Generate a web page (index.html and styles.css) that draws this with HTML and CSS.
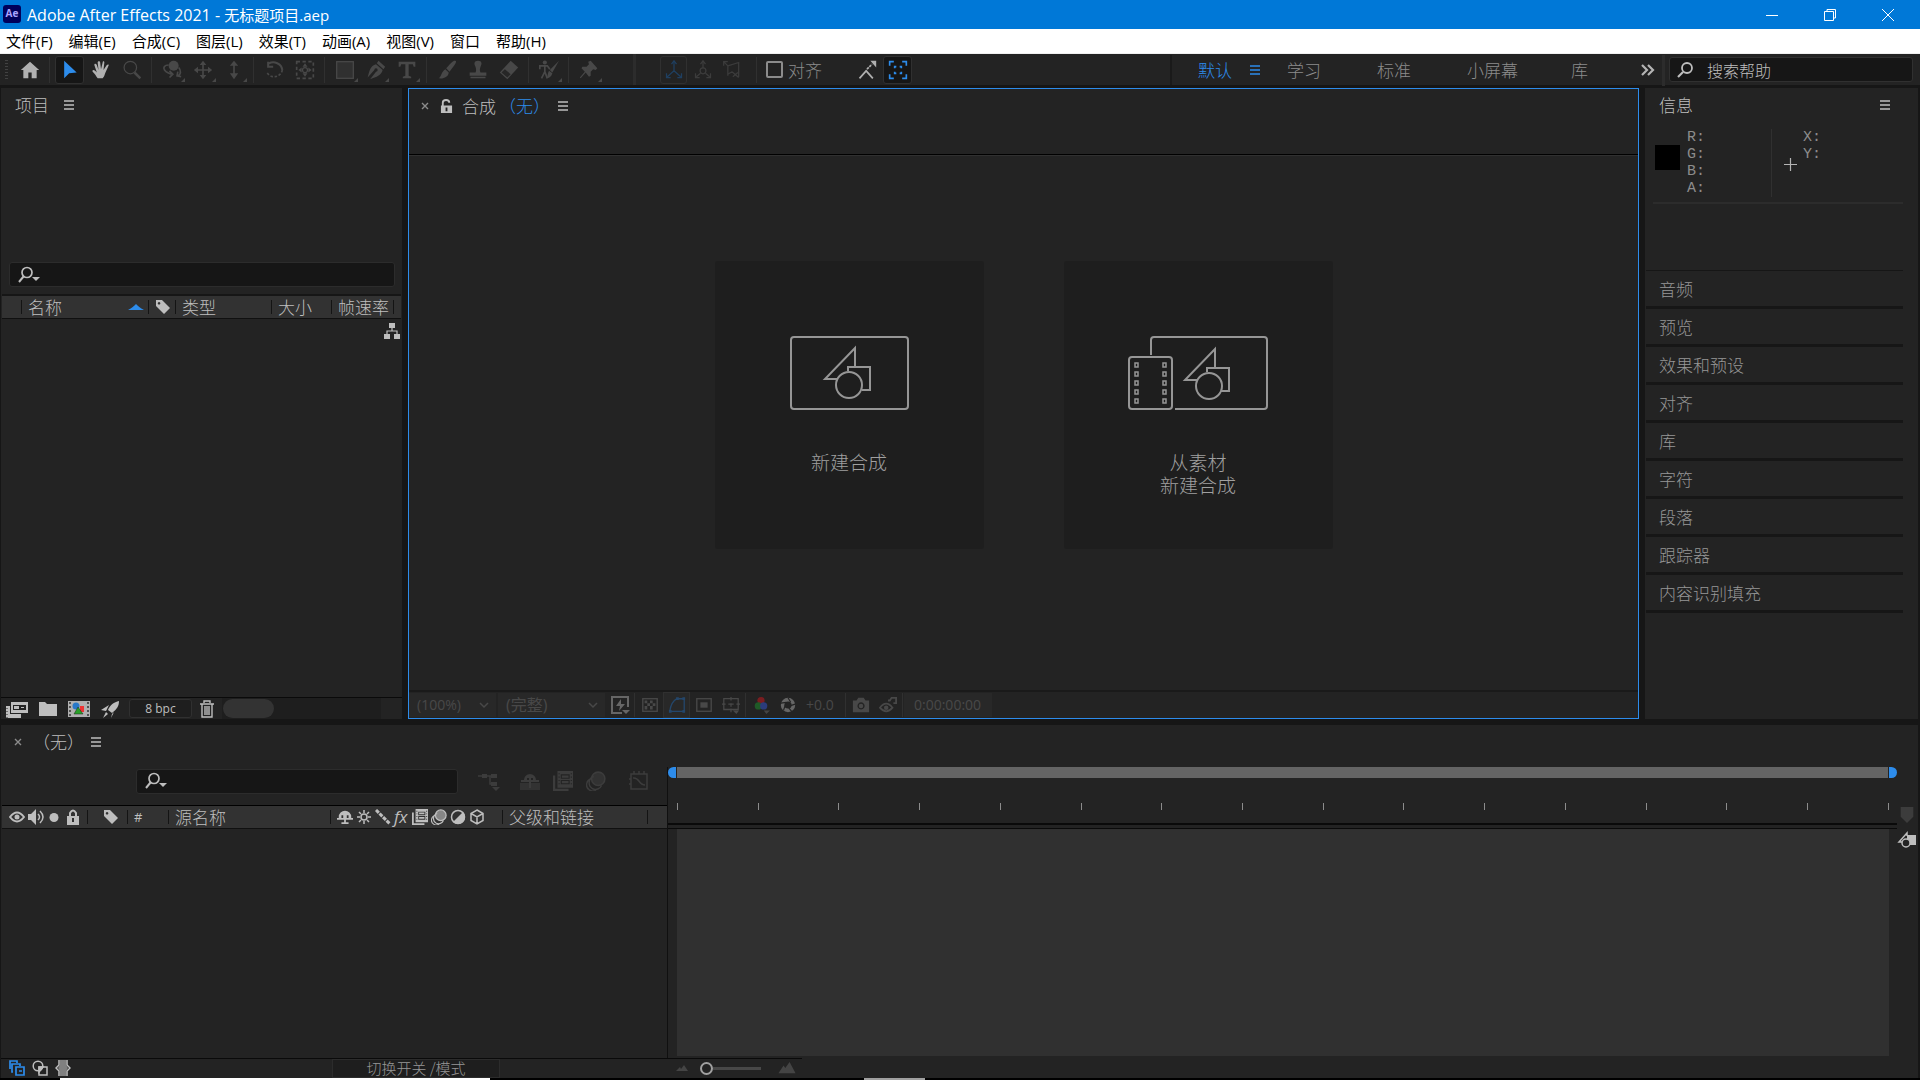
FILE: index.html
```html
<!DOCTYPE html>
<html lang="zh-CN">
<head>
<meta charset="utf-8">
<title>Adobe After Effects 2021 - 无标题项目.aep</title>
<link rel="stylesheet" href="styles.css">
</head>
<body>
<svg class="defs" aria-hidden="true">
  <symbol id="menu" viewBox="0 0 12 12"><path d="M1 2h10M1 6h10M1 10h10" stroke="currentColor" stroke-width="1.6"/></symbol>
  <symbol id="search-drop" viewBox="0 0 24 18"><circle cx="9" cy="6.500" r="5" fill="none" stroke="currentColor" stroke-width="1.700"/><path d="M5.500 10.500 1 16" stroke="currentColor" stroke-width="2"/><path d="M14 11h8l-4 4z" fill="currentColor"/></symbol>
  <symbol id="tag" viewBox="0 0 16 16"><path fill="currentColor" fill-rule="evenodd" d="M1 1h6l8 8-6 6-8-8zM4 3a1.300 1.300 0 1 0 .1 0z"/></symbol>
  <symbol id="close" viewBox="0 0 12 12"><path d="m3 3 6 6m0-6-6 6" stroke="currentColor" stroke-width="1.400"/></symbol>
  <symbol id="chev" viewBox="0 0 12 12"><path d="m2 4 4 4 4-4" stroke="currentColor" stroke-width="1.500" fill="none"/></symbol>
  <symbol id="film" viewBox="1 1 18 18"><path fill="currentColor" fill-rule="evenodd" d="M5 1h14v15H5zM8 4v4h8V4zM8 9v4h8V9zM6 3v1h1V3zm0 3v1h1V6zm0 3v1h1V9zm0 3v1h1v-1zM17 3v1h1V3zm0 3v1h1V6zm0 3v1h1V9zm0 3v1h1v-1z"/><path fill="currentColor" d="M9 5h6v2H9zM9 10h6v2H9z"/><path d="M2 5v13h13" fill="none" stroke="currentColor" stroke-width="2"/></symbol>
  <symbol id="blur" viewBox="1 1 18 18"><path d="M8 6a6 6 0 0 0-1 11 6 6 0 0 0 8-3M6 8a5.500 5.500 0 0 0-2 10 5 5 0 0 0 6 0" fill="none" stroke="currentColor" stroke-width="1.300"/><circle cx="12" cy="8" r="6" fill="currentColor" fill-opacity=".6" stroke="currentColor" stroke-width="1.400"/></symbol>
  <symbol id="shy" viewBox="1 1 18 18"><path fill="currentColor" fill-rule="evenodd" d="M3 10a7 7 0 0 1 14 0v1h2v2h-8v3h3v2H6v-2h3v-3H1v-2h2zm3-1v2h2V8H6zm6-1v3h2V8z"/></symbol>
</svg>
<div class="app">
  <header class="titlebar">
    <svg class="logo" viewBox="0 0 18 18"><rect width="18" height="18" rx="3" fill="#00005b"/><text x="9" y="12" text-anchor="middle" class="logo-text">Ae</text></svg>
    <h1>Adobe After Effects 2021 - <span class="file">无标题项目.aep</span></h1>
    <div class="window-buttons">
      <button aria-label="最小化"><svg viewBox="0 0 14 14"><path d="M1 7.500h12"/></svg></button>
      <button aria-label="还原"><svg viewBox="0 0 14 14"><path d="M1.500 3.500h9v9h-9zM4 3V1.500h8.500V10H11"/></svg></button>
      <button aria-label="关闭"><svg viewBox="0 0 14 14"><path d="m1 1 12 12M13 1 1 13"/></svg></button>
    </div>
  </header>
  <nav class="menubar">
    <button>文件(F)</button><button>编辑(E)</button><button>合成(C)</button><button>图层(L)</button><button>效果(T)</button><button>动画(A)</button><button>视图(V)</button><button>窗口</button><button>帮助(H)</button>
  </nav>

  <div class="toolbar">
    <i class="grip"></i>
    <button class="tool lit" aria-label="主页"><svg viewBox="0 0 24 24"><path fill="currentColor" d="M12 2 1 12h3v10h6v-7h4v7h6V12h3z"/></svg></button>
    <i class="sep"></i>
    <button class="tool on" aria-label="选取工具"><svg viewBox="0 0 24 24"><path fill="currentColor" d="M5 1v21l6-6 9-1z"/></svg></button>
    <button class="tool lit" aria-label="手形工具"><svg viewBox="0 0 24 24"><path fill="currentColor" d="M8 22c-2-3-3-5-6-8-1-2 1-3 3-1l2 2L4 6c0-2 2-2 3 0l2 6-1-9c0-2 3-2 3 0l1 8 2-8c0-2 2-2 2 0l-1 9 4-6c1-1 3-1 2 1l-4 9c-1 3-1 4-3 6z"/></svg></button>
    <button class="tool" aria-label="缩放工具"><svg viewBox="0 0 24 24" class="line"><circle cx="10" cy="9" r="7.500"/><path d="m15 15 7 7" stroke-width="3"/></svg></button>
    <i class="sep"></i>
    <button class="tool more" aria-label="轨道工具"><svg viewBox="0 0 24 24"><circle cx="14" cy="7" r="6" fill="currentColor"/><g class="line"><path d="M8 6C3 6 1 9 3 12s7 5 10 5M9 13l4 4-4 4M20 9c3 3 3 9-1 10M19 14l-1 5 5 1" stroke-width="2"/></g></svg></button>
    <button class="tool more" aria-label="平移工具"><svg viewBox="0 0 24 24"><path fill="currentColor" d="m12 1 4 5h-3v5h5V8l5 4-5 4v-3h-5v5h3l-4 5-4-5h3v-5H6v3l-5-4 5-4v3h5V6H8z"/></svg></button>
    <button class="tool more" aria-label="推拉工具"><svg viewBox="0 0 24 24"><path fill="currentColor" d="m12 1 5 6h-4v9h4l-5 7-5-7h4V7H7z"/></svg></button>
    <i class="sep"></i>
    <button class="tool" aria-label="旋转工具"><svg viewBox="0 0 24 24"><g class="line"><path d="M6 4c6-3 15 0 16 8M5 2v6h6" stroke-width="2.500"/><path d="M22 12a10 10 0 0 1-19 2" stroke-width="2" stroke-dasharray="3 2"/></g></svg></button>
    <button class="tool" aria-label="锚点工具"><svg viewBox="0 0 24 24"><rect x="2" y="2" width="20" height="20" class="line" stroke-width="2" stroke-dasharray="4 3"/><path fill="currentColor" d="m12 4 3 4H9zM12 20l3-4H9zM4 12l4-3v6zM20 12l-4-3v6z"/><circle cx="12" cy="12" r="3" class="line"/></svg></button>
    <i class="sep"></i>
    <button class="tool more" aria-label="矩形工具"><svg viewBox="0 0 24 24"><rect x="2" y="2" width="20" height="20" fill="#303030" stroke="currentColor" stroke-width="1.500"/></svg></button>
    <button class="tool more" aria-label="钢笔工具"><svg viewBox="0 0 24 24"><path fill="currentColor" d="m15 1 8 7-2 3-8-7zM12 5l8 7c-2 7-7 8-15 11l7-9a2 2 0 1 0-2-2l-8 9C4 13 5 7 12 5z"/></svg></button>
    <button class="tool more" aria-label="文字工具"><svg viewBox="0 0 24 24"><path fill="currentColor" d="M2 2h20v6h-2l-1-3h-5v14l3 1v2H7v-2l3-1V5H5L4 8H2z"/></svg></button>
    <i class="sep"></i>
    <button class="tool" aria-label="画笔工具"><svg viewBox="0 0 24 24"><path fill="currentColor" d="M22 1c2 1 1 3-7 13l-4-4C18 2 20 0 22 1zM10 11l4 4c0 5-6 8-12 7 4-3 3-8 8-11z"/></svg></button>
    <button class="tool" aria-label="仿制图章工具"><svg viewBox="0 0 24 24"><path fill="currentColor" d="M12 1c5 0 5 4 3 7-1 3-1 5 0 7h7v4H2v-4h7c1-2 1-4 0-7-2-3-2-7 3-7zM3 20h18v2H3z"/></svg></button>
    <button class="tool" aria-label="橡皮擦工具"><svg viewBox="0 0 24 24"><path fill="currentColor" d="m14 1 9 8-13 14-9-8z"/><path fill="#272727" d="m7 11 7 6-4 4-7-6z"/></svg></button>
    <i class="sep"></i>
    <button class="tool more" aria-label="Roto 笔刷工具"><svg viewBox="0 0 24 24"><circle cx="7" cy="3" r="2.500" fill="currentColor"/><path d="M1 11V7h9l3 4M7 7v7l-4 8m4-8 3 8" class="line" stroke-width="2"/><path fill="currentColor" d="M24 1 16 15l-3-3zM12 13l4 3c-1 4-4 6-7 6 2-3 1-6 3-9z"/></svg></button>
    <i class="sep"></i>
    <button class="tool more" aria-label="人偶位控点工具"><svg viewBox="0 0 24 24"><path fill="currentColor" d="m14 1 8 9-2 2-3-1-3 3v5l-2 1-4-5-6 7-1-1 6-7-4-4 1-2h5l3-3-1-3z"/></svg></button>
    <i class="sep wide"></i>
    <div class="axes">
      <button class="tool framed" aria-label="本地轴模式"><svg viewBox="0 0 24 24" class="line"><path d="M12 3v10l-8 7m8-7 8 7M9 5l3-4 3 4M3 16v5h5M21 16v5h-5"/></svg></button>
      <button class="tool" aria-label="世界轴模式"><svg viewBox="0 0 24 24" class="line"><circle cx="12" cy="13" r="3.500"/><path d="M12 3v7m-3 6-5 4m11-4 5 4M9 5l3-4 3 4M3 16v5h5M21 16v5h-5"/></svg></button>
      <button class="tool" aria-label="视图轴模式"><svg viewBox="0 0 24 24" class="line"><path d="M2 7V2h5M2 2l5 5M7 7v12M7 7l13-4v17M7 17l5-3M12 14l8 7M13 20l6-5"/></svg></button>
    </div>
    <i class="sep"></i>
    <label class="snap"><input type="checkbox">对齐</label>
    <button class="tool lit" aria-label="对齐选项"><svg viewBox="0 0 24 24"><path d="m3 22 8-9 8 9" class="line" stroke-width="2"/><path d="m12 11 6-6" class="line" stroke-width="2" stroke-dasharray="3 1"/><path fill="currentColor" d="M16 1h7v8z"/></svg></button>
    <button class="tool on" aria-label="对齐到图层"><svg viewBox="0 0 24 24" class="line"><path d="M2 7V2h5M17 2h5v5M22 17v5h-5M7 22H2v-5" stroke-width="2"/><path d="M8 10V8h2M14 8h2v2M16 14v2h-2M10 16H8v-2" stroke-width="2"/></svg></button>
    <div class="workspaces">
      <button class="ws current">默认</button><button class="burger current" aria-label="工作区菜单"><svg><use href="#menu"/></svg></button>
      <button class="ws">学习</button><button class="ws">标准</button><button class="ws">小屏幕</button><button class="ws">库</button>
      <button class="more-ws" aria-label="更多"><svg viewBox="0 0 14 14" class="line"><path d="m1 2 5 5-5 5m6-10 5 5-5 5" stroke-width="2.200"/></svg></button>
    </div>
    <label class="help"><svg viewBox="0 0 18 18" class="line"><circle cx="11" cy="7" r="5" stroke-width="1.800"/><path d="m7 11-5 5" stroke-width="2.200"/></svg><input type="text" placeholder="搜索帮助" aria-label="搜索帮助"></label>
  </div>

  <main class="workspace">
    <section class="panel project">
      <div class="tab"><h2>项目</h2><button class="burger" aria-label="面板菜单"><svg><use href="#menu"/></svg></button></div>
      <label class="search"><svg><use href="#search-drop"/></svg><input type="text" aria-label="搜索项目"></label>
      <table class="cols project-cols">
        <colgroup><col class="w19"><col class="w127"><col class="w27"><col class="w96"><col class="w60"><col class="w62"><col></colgroup>
        <thead><tr><th></th><th><span class="sorted">名称<svg viewBox="0 0 16 7"><path d="M8 0c2 2 4 4 8 6H0c4-2 6-4 8-6z" fill="#2d8ceb"/></svg></span></th><th><svg class="s16"><use href="#tag"/></svg></th><th>类型</th><th>大小</th><th>帧速率</th><th></th></tr></thead>
      </table>
      <div class="list"><button class="flow" aria-label="项目流程图"><svg viewBox="0 0 18 18"><path fill="currentColor" d="M6 1h6v5H6zM1 12h6v5H1zM11 12h6v5h-6z"/><path d="M9 6v3M4 12V9h10v3" class="line" stroke-width="1.200"/></svg></button></div>
      <div class="project-foot">
        <button aria-label="解释素材"><svg viewBox="0 0 24 18"><path fill="currentColor" fill-rule="evenodd" d="M6 2h17v11H6zm2 3v5h13V5zm8 2h3v1h-3zM9 6h5v3H9z"/><path d="M3 6v10h13" class="line" stroke-width="4"/><path d="M2 5v13" stroke="#232323" stroke-dasharray="1 2"/></svg></button>
        <button aria-label="新建文件夹"><svg viewBox="0 0 24 18"><path fill="currentColor" d="M3 2h6l2 2h10v12H3z"/></svg></button>
        <button aria-label="新建合成"><svg viewBox="0 0 24 18"><path fill="#b0b0b0" d="M1 1h22v16H1z"/><path d="M3 2v15M21 2v15" stroke="#333" stroke-width="1.500" stroke-dasharray="2 2"/><circle cx="9" cy="6" r="3.500" fill="#2878c8"/><path fill="#e33" d="M13 6h4v6h-4z"/><path fill="#28a028" stroke="#222" stroke-width=".5" d="m11 7 5 7H7z"/></svg></button>
        <button aria-label="项目设置"><svg viewBox="0 0 24 18"><path fill="currentColor" d="M21 1c0 5-2 8-7 12l-4-3c2-5 6-8 11-9zM11 5l-8 5 5 1zM14 14l2-2-3 6zM8 12l2 2-5 4z"/></svg></button>
        <button class="bpc">8 bpc</button>
        <button class="trash" aria-label="删除"><svg viewBox="4 0 16 18"><path d="M5 4h14M9 3V1h6v2M7 4v13h10V4M10 6v9m2-9v9m2-9v9" class="line" stroke-width="1.400"/></svg></button>
        <div class="track"><i></i></div>
      </div>
    </section>

    <section class="panel comp">
      <div class="tab comp-tab"><button class="x" aria-label="关闭"><svg><use href="#close"/></svg></button><svg class="lock" viewBox="0 0 14 16"><path d="M3 8V4c0-4 7-4 7 0" class="line" stroke-width="2"/><path fill="currentColor" fill-rule="evenodd" d="M1 7h12v8H1zm5 2v4h2V9z"/></svg><h2>合成<span class="blue">（无）</span></h2><button class="burger" aria-label="面板菜单"><svg><use href="#menu"/></svg></button></div>
      <div class="stage">
        <button class="card">
          <svg viewBox="0 0 142 76"><g class="line"><rect x="13" y="2" width="117" height="72" rx="3"/><path d="M77 32V13L47 44h12M70 36v-4h22v23h-8"/><circle cx="71" cy="50" r="13"/></g></svg>
          <span>新建合成</span>
        </button>
        <button class="card">
          <svg viewBox="0 0 142 76"><g class="line"><path d="M24 20V5q0-3 3-3h110q3 0 3 3v66q0 3-3 3H48M88 33V14L58 45h12M80 37v-4h22v23h-8"/><rect x="2" y="22" width="43" height="52" rx="3"/><circle cx="82" cy="51" r="13"/><path stroke-width="1.500" d="M8 28h3v4H8zM8 37h3v4H8zM8 46h3v4H8zM8 55h3v4H8zM8 64h3v4H8zM36 28h3v4h-3zM36 37h3v4h-3zM36 46h3v4h-3zM36 55h3v4h-3zM36 64h3v4h-3z"/></g></svg>
          <span>从素材<br>新建合成</span>
        </button>
      </div>
      <div class="comp-foot">
        <button class="drop d1">(100%)<svg><use href="#chev"/></svg></button>
        <button class="drop d2">(完整)<svg><use href="#chev"/></svg></button>
        <button class="ic lighter" aria-label="快速预览"><svg viewBox="0 0 20 20"><path d="M12 18H2V2h16v10" class="line" stroke-width="2"/><path fill="currentColor" d="M11 4 6 11h4l-1 5 6-7h-4zM12 15h8l-4 4z"/></svg></button>
        <i class="fsep"></i>
        <button class="ic" aria-label="透明网格"><svg viewBox="0 0 20 20"><rect x="2" y="3" width="16" height="14" class="line"/><path fill="currentColor" d="M4 5h3v3H4zM10 5h3v3h-3zM7 8h3v3H7zM13 8h3v3h-3zM4 11h3v4H4zM10 11h3v4h-3z"/></svg></button>
        <button class="ic mask" aria-label="蒙版"><svg viewBox="0 0 20 20" class="line"><path d="M2 17h16V3h-8C6 5 3 10 2 17z"/><path d="M1 17h3M16 17h3M16 3h3M9 3h3" stroke-width="3"/></svg></button>
        <button class="ic" aria-label="目标区域"><svg viewBox="0 0 20 20"><rect x="2" y="3" width="16" height="14" class="line"/><path fill="currentColor" d="M6 7h8v6H6z"/></svg></button>
        <button class="ic" aria-label="网格和参考线"><svg viewBox="0 0 20 20"><path d="M2 3h16v12H2zM10 1v4m0 3v4m0 2v4M0 9h4m3 0h6m3 0h4" class="line" stroke-width="1.400"/><path fill="currentColor" d="M12 16h7l-3 4z"/></svg></button>
        <i class="fsep"></i>
        <button class="ic rgb" aria-label="通道"><svg viewBox="0 0 20 20"><circle cx="10" cy="5" r="4" fill="#7a1d20"/><circle cx="7" cy="11" r="4" fill="#1f5a27"/><circle cx="13" cy="11" r="4" fill="#2b3c7b"/><path fill="#444" d="M13 16h7l-4 4z"/></svg></button>
        <button class="ic lens" aria-label="重置曝光度"><svg viewBox="0 0 20 20"><circle cx="10" cy="10" r="6" class="line" stroke-width="4"/><path d="m10 2 3 5M18 9l-6 2M14 17l-4-5M5 16l2-6M2 8l6-1" stroke="#232323" stroke-width="1.300"/></svg></button>
        <span class="expo">+0.0</span>
        <i class="fsep"></i>
        <button class="ic" aria-label="拍摄快照"><svg viewBox="0 0 20 20"><path fill="currentColor" fill-rule="evenodd" d="M1 5h4l2-3h6l2 3h4v13H1zm9 2a4 4 0 1 0 .1 0z"/><circle cx="10" cy="11" r="2.500" fill="currentColor"/></svg></button>
        <button class="ic" aria-label="显示快照"><svg viewBox="0 0 20 20"><path d="M1 13q7-9 14 0-7 8-14 0z" class="line" stroke-width="2"/><circle cx="8" cy="13" r="2.500" fill="currentColor"/><path d="M10 5h2l2-3h5v6h-3" class="line" stroke-width="2"/></svg></button>
        <i class="fsep"></i>
        <span class="time">0:00:00:00</span>
      </div>
    </section>

    <aside class="panel side">
      <div class="tab"><h2>信息</h2><button class="burger" aria-label="面板菜单"><svg><use href="#menu"/></svg></button></div>
      <div class="info">
        <i class="swatch"></i>
        <ul class="rgba"><li>R:</li><li>G:</li><li>B:</li><li>A:</li></ul>
        <svg class="cross" viewBox="0 0 13 13"><path d="M6.500 0v13M0 6.500h13" stroke="#b4b4b4" stroke-width="1.200"/></svg>
        <ul><li>X:</li><li>Y:</li></ul>
      </div>
      <ul class="drawers"><li><button>音频</button></li><li><button>预览</button></li><li><button>效果和预设</button></li><li><button>对齐</button></li><li><button>库</button></li><li><button>字符</button></li><li><button>段落</button></li><li><button>跟踪器</button></li><li><button>内容识别填充</button></li></ul>
    </aside>

    <section class="panel timeline">
      <div class="layers">
        <div class="tab time-tab"><button class="x" aria-label="关闭"><svg><use href="#close"/></svg></button><h2>（无）</h2><button class="burger" aria-label="面板菜单"><svg><use href="#menu"/></svg></button></div>
        <div class="time-tools">
          <label class="search"><svg><use href="#search-drop"/></svg><input type="text" aria-label="搜索图层"></label>
          <button class="ic first" aria-label="合成微型流程图"><svg viewBox="0 0 22 20"><path d="M0 5h9M9 5h4M12 5v8h3M14 5h4M14 13h4" class="line"/><path fill="currentColor" d="M4 3h5v4H4zM13 3h6v4h-6zM13 11h6v4h-6zM14 16h8l-4 4z"/></svg></button>
          <button class="ic" aria-label="隐藏消隐图层"><svg viewBox="0 0 20 20"><path fill="currentColor" opacity=".6" d="M0 12h20v7H0z"/><path fill="currentColor" fill-rule="evenodd" d="M4 9a6 6 0 0 1 12 0h3v2h-8v6H9v-6H1V9zm3-2v2h2V7zm4 0v2h2V7z"/></svg></button>
          <button class="ic" aria-label="帧混合"><svg><use href="#film"/></svg></button>
          <button class="ic" aria-label="运动模糊"><svg><use href="#blur"/></svg></button>
          <button class="ic last" aria-label="图表编辑器"><svg viewBox="0 0 20 20" class="line"><path d="M2 3h16v15H2zM5 0v3m5-3v3m5-3v3M0 8h2m-2 5h2M4 7c7-1 5 7 12 7"/></svg></button>
        </div>
        <table class="cols time-cols">
          <colgroup><col class="w85"><col class="w40"><col class="w41"><col class="w162"><col class="w172"><col class="w145"><col></colgroup>
          <thead><tr>
            <th><span class="switches"><svg viewBox="0 0 16 16"><path d="M1 8q7-9 14 0-7 9-14 0z" class="line" stroke-width="2"/><circle cx="8" cy="8" r="2.500" fill="currentColor"/></svg><svg viewBox="0 0 16 16"><path fill="currentColor" d="M0 5h3l5-5v16l-5-5H0z"/><path d="M10 5q3 3 0 6M12 2q6 6 0 12" class="line"/></svg><svg viewBox="0 0 16 16"><circle cx="7" cy="8.500" r="4.500" fill="currentColor"/></svg><svg viewBox="0 0 16 16"><path d="M4 8V4q3-5 6 0v4" class="line" stroke-width="2"/><path fill="currentColor" fill-rule="evenodd" d="M1 7h12v9H1zm5 2v4h2V9z"/></svg></span></th>
            <th class="tagcell"><svg class="s16"><use href="#tag"/></svg></th><th class="hash">#</th><th>源名称</th>
            <th><span class="switches"><svg><use href="#shy"/></svg><svg viewBox="0 0 16 16"><circle cx="8" cy="8" r="3" class="line"/><path d="M8 1v3m0 8v3M1 8h3m8 0h3M3 3l2 2m6 6 2 2m0-10-2 2m-6 6-2 2" class="line"/></svg><svg viewBox="0 0 16 16"><path d="m1 1 14 14" class="line" stroke-width="3" stroke-dasharray="4 1"/></svg><em>fx</em><svg><use href="#film"/></svg><svg><use href="#blur"/></svg><svg viewBox="0 0 16 16"><circle cx="8" cy="8" r="6.500" class="line"/><path fill="currentColor" d="M13 3 3 13a7 7 0 1 1 10-10z" transform="rotate(180 8 8)"/></svg><svg viewBox="0 0 16 16"><path d="M8 1 14 4.500v7L8 15l-6-3.500v-7zM2 4.500 8 8l6-3.500M8 8v7" class="line"/></svg></span></th>
            <th>父级和链接</th><th></th>
          </tr></thead>
        </table>
        <div class="layer-list"></div>
      </div>
      <div class="ruler-side">
        <div class="workarea"><i class="handle left"></i><i class="bar"></i><i class="handle right"></i></div>
        <div class="ticks"><i></i><i></i><i></i><i></i><i></i><i></i><i></i><i></i><i></i><i></i><i></i><i></i><i></i><i></i><i></i><i></i></div>
        <div class="lane"><div></div></div>
      </div>
      <div class="rail">
        <svg viewBox="0 0 16 20"><path fill="#3c3c3c" d="M1 1h14v11l-7 7-7-7z"/></svg>
        <button aria-label="合成按钮"><svg viewBox="0 0 20 18"><path fill="currentColor" d="M10 4h9v10h-9z"/><path d="M10 5V2L2 11h4" class="line"/><circle cx="9" cy="12" r="4" fill="#232323" stroke="currentColor" stroke-width="1.500"/></svg></button>
      </div>
      <footer class="time-foot">
        <div class="toggles">
          <button class="active" aria-label="图层开关窗格"><svg viewBox="0 0 16 16" class="line"><path d="M1 9V1h7v2M4 12H3V4h8v2M7 7h8v8H7zM10 11h3" stroke-width="1.700"/></svg></button>
          <button aria-label="转换控制窗格"><svg viewBox="0 0 16 16" class="line"><circle cx="6" cy="6" r="4.800"/><path d="M7 7h8v8H7z"/><path d="m7 12 4-5H7z" fill="currentColor"/></svg></button>
          <button aria-label="入点/出点窗格"><svg viewBox="0 0 16 16"><path fill="#808080" d="M5 0h6v5l2 3-2 3v5H5v-5L3 8l2-3z"/><path d="M4 0v5L1 8l3 3v5M12 0v5l3 3-3 3v5" class="line"/></svg></button>
        </div>
        <button class="mode">切换开关 /模式</button>
        <div class="zoomer"><svg viewBox="0 0 12 8"><path fill="#444" d="m0 7 4-4 1 2 3-4 4 6z"/></svg><input type="range" min="0" max="100" value="0" aria-label="缩放"><svg class="big" viewBox="0 0 20 14"><path fill="#444" d="m0 13 6-9 2 3 5-7 7 13z"/></svg></div>
      </footer>
    </section>
  </main>
  <div class="edge"><i class="white"></i><i class="gray"></i></div>
</div>
</body>
</html>
```
FILE: styles.css
```css
* { box-sizing: border-box; }
body, h1, h2, ul { margin: 0; padding: 0; }
ul { list-style: none; }
body { background: #161616; color: #bebebe; font: 17px/24px "Noto Sans CJK SC", sans-serif; font-weight: 300; }
button { margin: 0; padding: 0; border: 0; background: none; color: inherit; font: inherit; display: flex; align-items: center; flex: none; }
input { font: inherit; color: inherit; }
svg { display: block; flex: none; }
h1, h2 { font: inherit; }
.defs { width: 0; height: 0; position: absolute; }
.line { fill: none; stroke: currentColor; }
.line:not([stroke-width]) { stroke-width: 1.5; }
.app { min-height: 100vh; display: flex; flex-direction: column; overflow: hidden; }

.titlebar { height: 29px; background: #0078d7; color: #fff; display: flex; align-items: center; padding: 0 4px 0 3px; font: 16px/28px "Open Sans", "Noto Sans CJK SC", sans-serif; }
.file { font-size: 15px; }
.logo { width: 18px; height: 18px; margin-right: 6px; margin-bottom: 2px; }
.logo-text { font: bold 10px "Open Sans", sans-serif; fill: #a9a3ff; }
.window-buttons { margin-left: auto; display: flex; gap: 1px; }
.window-buttons button { width: 57px; height: 29px; justify-content: center; }
.window-buttons svg { width: 14px; height: 14px; fill: none; stroke: #fff; stroke-width: 1; }
.menubar { height: 25px; background: #fff; border-bottom: 1px solid #f0f0f0; color: #000; display: flex; gap: 16px; padding-left: 6px; font: 15px/24px "Open Sans", "Noto Sans CJK SC", sans-serif; }

.toolbar { height: 31px; background: #232323; display: flex; align-items: center; color: #484848; padding-right: 7px; }
.grip { width: 3px; height: 20px; margin: 0 6px 0 5px; background: repeating-linear-gradient(#424242 0 1px, #232323 1px 3px); flex: none; }
.tool { width: 29px; height: 28px; margin: 0 1px; justify-content: center; border-radius: 3px; position: relative; }
.tool svg { width: 20px; height: 20px; }
.tool.lit { color: #b0b0b0; }
.tool.on { background: #161616; border: 1px solid #303030; color: #2d8ceb; }
.tool.more::after { content: ""; position: absolute; right: 1px; bottom: 2px; border: 2px solid; border-color: transparent currentColor currentColor transparent; }
.sep { width: 1px; height: 26px; background: #303030; margin: 0 4px; flex: none; }
.sep.wide { width: 3px; height: 31px; margin: 0 23px 0 29px; background: #2c2c2c; }
.axes { display: flex; color: #3c3c3c; padding-right: 6px; }
.axes .tool { width: 27px; }
.axes .framed { border: 1px solid #303030; color: #1f3f60; }
.snap { display: flex; align-items: center; gap: 5px; color: #8c8c8c; margin: 0 29px 0 5px; }
.snap input { appearance: none; width: 17px; height: 17px; margin: 0; border: 2px solid #8c8c8c; border-radius: 2px; }
.workspaces { margin-left: auto; display: flex; align-items: center; border-left: 2px solid #1a1a1a; height: 30px; padding-left: 26px; color: #8c8c8c; }
.ws { margin-right: 56px; }
.ws.current { margin-right: 17px; }
.burger svg { width: 12px; height: 12px; }
.workspaces .burger { margin-right: 26px; }
.current { color: #2d8ceb; }
.ws:nth-last-child(2), .ws:nth-last-child(3) { margin-right: 53px; }
.more-ws { color: #b4b4b4; margin-right: 8px; }
.more-ws svg { width: 14px; height: 14px; }
.help { display: flex; align-items: center; gap: 13px; width: 244px; height: 25px; padding-left: 6px; background: #161616; border: 1px solid #303030; border-radius: 3px; color: #bebebe; font-size: 16px; position: relative; margin-left: 6px; }
.help::before { content: ""; position: absolute; left: -8px; top: -3px; width: 3px; height: 31px; background: #2c2c2c; }
.help svg { width: 18px; height: 18px; }
.help input, .search input { background: none; border: 0; padding: 0; min-width: 0; flex: 1; outline: 0; }
.help input::placeholder { color: #bebebe; opacity: 1; }

.workspace { flex: 1; display: grid; grid-template-columns: 401px minmax(0, 1fr) 273px; grid-template-rows: minmax(0, 631fr) minmax(0, 353fr); column-gap: 6px; row-gap: 6px; padding: 3px 2px 0 1px; }
.panel { background: #232323; display: flex; flex-direction: column; min-width: 0; }
.tab { display: flex; align-items: center; height: 34px; gap: 14px; padding-left: 14px; flex: none; }
.search { display: flex; align-items: center; gap: 4px; height: 25px; padding-left: 8px; background: #161616; border: 1px solid #2c2c2c; border-radius: 3px; flex: none; }
.search svg { width: 24px; height: 18px; }
.project .search { margin: 140px 7px 7px 8px; }
.cols { border-collapse: collapse; table-layout: fixed; background: #323232; border-top: 2px solid #161616; border-bottom: 1px solid #101010; line-height: 22px; }
.cols th { height: 22px; padding: 0 0 0 7px; font-weight: 300; text-align: left; overflow: hidden; white-space: nowrap; background: linear-gradient(#141414, #141414) left center / 1px 14px no-repeat; }
.cols th:first-child { background: none; }
.project-cols { width: 399px; margin-left: 1px; }
.w19 { width: 19px; } .w127 { width: 127px; } .w27 { width: 27px; } .w96 { width: 96px; } .w60 { width: 60px; } .w62 { width: 62px; }
.w85 { width: 85px; } .w40 { width: 40px; } .w41 { width: 41px; } .w162 { width: 162px; } .w172 { width: 172px; } .w145 { width: 145px; }
.sorted { display: flex; align-items: center; justify-content: space-between; padding-right: 4px; }
.sorted svg { width: 16px; height: 7px; }
.s16 { width: 16px; height: 16px; }
.list { flex: 1; display: flex; justify-content: flex-end; align-items: flex-start; padding: 3px 1px; }
.flow svg { width: 18px; height: 18px; }
.project-foot { height: 22px; border-top: 1px solid #0a0a0a; display: flex; align-items: center; padding-left: 4px; gap: 7px; flex: none; }
.project-foot svg { width: 24px; height: 18px; }
.project-foot .trash svg { width: 16px; }
.bpc { width: 63px; height: 19px; border: 1px solid #303030; border-radius: 3px; background: #1e1e1e; justify-content: center; font: 12px/18px "Open Sans", sans-serif; }
.track { width: 159px; height: 21px; background: #1e1e1e; }
.track i { display: block; width: 51px; height: 19px; margin: 1px; border-radius: 10px; background: #333; }

.comp { border: 1px solid #2d8ceb; }
.comp-tab { gap: 9px; padding-left: 10px; }
.x svg { width: 12px; height: 12px; color: #8c8c8c; }
.lock { width: 13px; height: 15px; }
.blue { color: #2d8ceb; margin-left: 3px; }
.comp-tab .burger { margin-left: -2px; }
.stage { flex: 1; margin-top: 31px; border-top: 1px solid #000; border-bottom: 2px solid #1a1a1a; box-shadow: inset 0 1px #303030; display: flex; justify-content: center; align-items: flex-start; gap: 80px; padding-top: 106px; }
.card { width: 269px; height: 288px; border-radius: 3px; background: #1e1e1e; color: #a0a0a0; flex-direction: column; padding-top: 74px; font-size: 19px; line-height: 23px; text-align: center; gap: 39px; }
.card svg { width: 142px; height: 76px; }
.card .line { stroke-width: 2; color: #969696; }
.comp-foot { height: 26px; display: flex; align-items: center; color: #484848; font: 14px/24px "Open Sans", "Noto Sans CJK SC", sans-serif; flex: none; }
.drop { height: 24px; justify-content: space-between; background: #282828; padding: 0 6px 0 8px; margin-right: 2px; }
.drop svg { width: 12px; height: 12px; }
.d1 { width: 87px; }
.d2 { width: 107px; font-size: 16px; }
.ic { width: 27px; height: 26px; justify-content: center; }
.ic svg { width: 20px; height: 20px; }
.comp-foot .ic svg { width: 18px; height: 18px; }
.comp-foot .lighter { width: 26px; color: #666; }
.comp-foot .lighter svg { width: 20px; height: 20px; }
.lens { color: #666; }
.mask { color: #24466a; background: #282828; border: 1px solid #303030; }
.fsep { width: 1px; height: 24px; background: #303030; margin: 0 1px; }
.expo { width: 38px; margin-left: 5px; }
.time { width: 88px; height: 24px; background: #282828; padding-left: 10px; }

.side .tab { justify-content: space-between; padding-right: 27px; }
.info { height: 82px; margin: 0 15px 0 8px; border-bottom: 2px solid #2c2c2c; display: grid; grid-template-columns: 25px 85px 17px 1fr; column-gap: 7px; font: 15px/17px "Liberation Mono", monospace; color: #8c8c8c; align-items: start; padding: 7px 0 0 2px; }
.swatch { width: 25px; height: 25px; background: #000; margin-top: 16px; }
.rgba { border-right: 1px solid #303030; height: 68px; }
.cross { width: 13px; height: 13px; margin-top: 29px; margin-left: 5px; }
.drawers { margin: 66px 15px 0 1px; border-top: 1px solid #161616; }
.drawers li { height: 38px; border-bottom: 3px solid #161616; display: flex; }
.drawers button { padding-left: 13px; color: #969696; flex: 1; }

.timeline { grid-column: 1 / -1; display: grid; grid-template-columns: 667px minmax(0, 1fr) 21px; grid-template-rows: minmax(0, 1fr) 20px; }
.layers { display: flex; flex-direction: column; background: linear-gradient(#101010, #101010) right bottom / 1px calc(100% - 42px) no-repeat; }
.time-tab { gap: 14px; padding-left: 11px; }
.time-tab h2 { margin-left: -5px; }
.time-tab .burger { margin-left: -8px; }
.time-tools { display: flex; align-items: center; height: 46px; padding: 0 0 2px 135px; color: #3c3c3c; gap: 6px; }
.time-tools .search { width: 322px; color: #bebebe; }
.first { margin-left: 11px; }
.first svg { width: 22px; }
.time-tools .first { margin-right: 8px; }
.last { margin-left: 10px; }
.time-cols { width: 665px; margin-left: 1px; border-top-width: 1px; border-top-color: #000; }
.switches { display: flex; align-items: center; gap: 3px; }
.switches svg { width: 16px; height: 16px; }
.switches em { width: 15px; font: italic 17px/20px "Open Sans", sans-serif; }
.cols .tagcell { padding-left: 16px; }
.cols .hash { font: 13px/22px "Open Sans", sans-serif; }
.layer-list { flex: 1; }
.ruler-side { display: flex; flex-direction: column; padding-top: 42px; min-width: 0; }
.workarea { display: flex; height: 11px; gap: 1px; }
.bar { flex: 1; background: #646464; }
.handle { width: 8px; background: #2d8ceb; }
.handle.left { border-radius: 6px 0 0 6px; }
.handle.right { border-radius: 0 6px 6px 0; }
.ticks { height: 47px; display: flex; justify-content: space-between; padding: 25px 8px 0 9px; border-bottom: 2px solid #0a0a0a; }
.ticks i { width: 1px; height: 7px; background: #8c8c8c; }
.lane { flex: 1; margin-top: 3px; border-top: 1px solid #0a0a0a; padding: 0 8px 2px 9px; display: flex; }
.lane div { flex: 1; background: #303030; }
.rail { padding-top: 81px; }
.rail svg { width: 20px; height: 18px; }
.rail button { margin-top: 7px; }
.time-foot { grid-column: 1 / -1; display: flex; align-items: center; background: linear-gradient(#0a0a0a, #0a0a0a) left top / 801px 1px no-repeat; }
.toggles { display: flex; gap: 7px; padding-left: 8px; width: 331px; }
.toggles svg { width: 16px; height: 16px; }
.active { color: #2d8ceb; }
.mode { width: 168px; height: 19px; justify-content: center; background: #1e1e1e; border: 1px solid #2c2c2c; font-size: 15px; line-height: 16px; color: #969696; }
.zoomer { display: flex; align-items: center; margin-left: 176px; }
.zoomer svg { width: 12px; height: 8px; }
.zoomer .big { width: 20px; height: 12px; margin-left: 16px; }
.zoomer input { appearance: none; width: 61px; height: 14px; margin: 0 0 0 12px; background: linear-gradient(#484848, #484848) right center / 48px 3px no-repeat; }
.zoomer input::-webkit-slider-thumb { appearance: none; width: 13px; height: 13px; border: 2px solid #a0a0a0; border-radius: 50%; background: #232323; }
.edge { height: 2px; background: #000; display: flex; padding-left: 60px; }
.white { width: 430px; background: #fff; }
.gray { width: 61px; margin-left: 374px; background: #a0a0a0; }
```
